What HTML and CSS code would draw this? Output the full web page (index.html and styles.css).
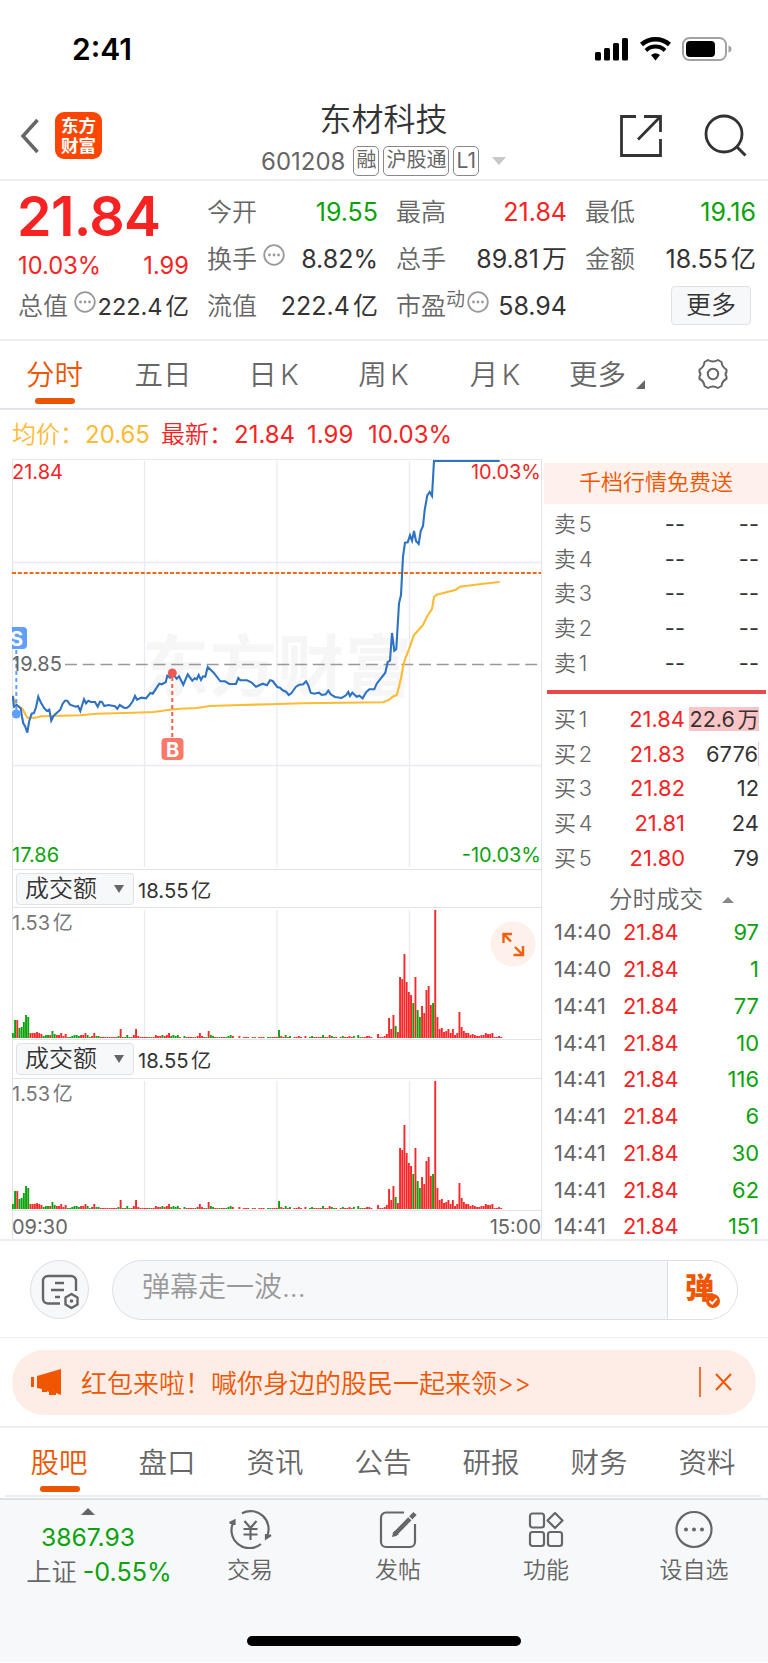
FILE: index.html
```html
<!DOCTYPE html>
<html lang="zh-CN">
<head>
    <meta charset="UTF-8">
    <meta name="viewport" content="width=device-width, initial-scale=1.0">
    <title>东材科技 601208</title>
    <link rel="stylesheet" href="styles.css">
</head>
<body>
    <!-- Status bar -->
    <div class="status-bar">
        <span class="status-time">2:41</span>
        <svg class="status-icons" width="138" height="26" viewBox="0 0 138 26">
            <rect x="1" y="16" width="6" height="8.500" rx="1.500"/>
            <rect x="10" y="12" width="6" height="12.500" rx="1.500"/>
            <rect x="19" y="7" width="6" height="17.500" rx="1.500"/>
            <rect x="28" y="2" width="6" height="22.500" rx="1.500"/>
            <path d="M47.500 8.500a21 21 0 0 1 28 0" fill="none" stroke="#000" stroke-width="4.500"/>
            <path d="M52 14.500a13.500 13.500 0 0 1 19 0" fill="none" stroke="#000" stroke-width="4"/>
            <path d="M57 19a7.500 7.500 0 0 1 9 0L61.500 24.500z"/>
            <rect x="89" y="2" width="43" height="22" rx="6.500" fill="none" stroke="#a2a2a2" stroke-width="2"/>
            <rect x="92" y="5" width="29" height="16" rx="4"/>
            <path d="M134.500 9.500q3 1 3 3.500t-3 3.500z" fill="#a2a2a2"/>
        </svg>
    </div>

    <!-- Header -->
    <header class="header">
        <svg class="back" width="20" height="36" viewBox="0 0 20 36"><path d="M17.500 2L3 18l14.500 16" fill="none" stroke="#666" stroke-width="3.500"/></svg>
        <div class="logo">东方<br>财富</div>
        <div class="title">
            <h1>东材科技</h1>
            <div class="code">
                <span>601208</span>
                <em>融</em><em>沪股通</em><em>L1</em>
                <svg width="14" height="8" viewBox="0 0 14 8"><path d="M0 0h14L7 8z" fill="#c8c8c8"/></svg>
            </div>
        </div>
        <svg class="share" width="44" height="44" viewBox="0 0 44 44"><path d="M17 2.500H2.500v39h39V25M25 2.500h16.500V18M41 3L19 25.500" fill="none" stroke="#333" stroke-width="2.800"/></svg>
        <svg class="search" width="44" height="44" viewBox="0 0 44 44"><circle cx="20" cy="20" r="18" fill="none" stroke="#333" stroke-width="2.800"/><path d="M33 33l8.500 8.500" stroke="#333" stroke-width="3"/></svg>
    </header>

    <!-- Quote -->
    <section class="quote">
        <div class="quote-col first">
            <div class="price">21.84</div>
            <div class="row change red"><span>10.03%</span><span>1.99</span></div>
            <div class="row"><label>总值</label><svg class="tip" viewBox="0 0 22 22"><use href="#tip"/></svg><b class="small">222.4亿</b></div>
        </div>
        <div class="quote-col">
            <div class="row"><label>今开</label><b class="green">19.55</b></div>
            <div class="row"><label>换手</label><svg class="tip" viewBox="0 0 22 22"><use href="#tip"/></svg><b>8.82%</b></div>
            <div class="row"><label>流值</label><b>222.4亿</b></div>
        </div>
        <div class="quote-col">
            <div class="row"><label>最高</label><b class="red">21.84</b></div>
            <div class="row"><label>总手</label><b>89.81万</b></div>
            <div class="row"><label>市盈<sup>动</sup></label><svg class="tip pe" viewBox="0 0 22 22"><use href="#tip"/></svg><b>58.94</b></div>
        </div>
        <div class="quote-col">
            <div class="row"><label>最低</label><b class="green">19.16</b></div>
            <div class="row"><label>金额</label><b>18.55亿</b></div>
            <div class="row"><button class="more-btn">更多</button></div>
        </div>
    </section>

    <!-- Period tabs -->
    <nav class="periods">
        <a class="active">分时</a>
        <a>五日</a>
        <a>日K</a>
        <a>周K</a>
        <a>月K</a>
        <a class="more">更多<svg width="9" height="9" viewBox="0 0 9 9"><path d="M9 0v9H0z" fill="#666"/></svg></a>
        <svg class="gear" width="32" height="32" viewBox="0 0 32 32" fill="none" stroke="#666" stroke-width="2">
            <circle cx="16" cy="16" r="5.200"/>
            <path d="M11 2Q16 5 21 2L24.500 4Q25 9 29.500 11.500V14Q27.500 16 29.500 18.500V21Q25 23 24.500 28L21 30Q16 27 11 30L7.500 28Q7 23 2.500 21V18.500Q4.500 16 2.500 14V11.500Q7 9 7.500 4Z" stroke-linejoin="round"/>
        </svg>
    </nav>

    <div class="legend">
        <span class="avg">均价：</span><span class="avg v1">20.65</span>
        <span class="red v2">最新：</span><span class="red v3">21.84</span><span class="red v4">1.99</span><span class="red v5">10.03%</span>
    </div>

    <!-- Chart and order book -->
    <main class="market">
        <div class="charts">
            <svg class="chart" width="530" height="410" viewBox="0 0 530 410">
                <text class="watermark" x="130" y="232" textLength="270">东方财富</text>
                <path class="grid" d="M132.500 2v406M265 2v406M397.500 2v406M0 103.500h529M0 306.500h529"/>
                <path d="M0 114h529" stroke="#f26a1b" stroke-width="2" stroke-dasharray="4 1.850"/>
                <path d="M53 205.500h475" stroke="#999" stroke-width="1.500" stroke-dasharray="12 5.700"/>
                <polyline class="avg-line" points="0.7,237 4.7,246 10.7,250.3 15.3,258.7 23,258.7 29.7,257.3 68,256.3 84.7,254.7 121.3,253.7 141.3,253 158,250.7 168,249.7 184.7,249 198,247 228,246 258,245.3 291.3,244.3 371.3,243.3 377.3,240.7 380.7,237.7 384.7,236 387,227.7 389.3,217.7 391,207.7 393,200.3 397.3,189.3 402,176 406.3,171.3 411,166 415.3,157 420,150 422,138 424.7,135.7 444,130.7 448,127.7 471.3,124.7 487.7,123"/>
                <polyline class="price-line" points="0.7,237 2,247.7 4.7,246 8.7,249.3 10,257.7 11.3,264.3 13.3,267.7 15.3,273.7 17.3,261.7 19.7,254.7 22,254 24,248.3 26.3,237.7 28.7,243.3 32.3,249.3 35,252 37.3,250.7 39.3,261.7 41.7,256.7 48.3,250.7 50.7,244.7 53,241.7 55.3,241.7 58,245.7 63.7,247.7 66,247 68.3,252 72,240.3 74,244.3 76.3,241.7 78.7,243 83,243 85.7,247.7 88,242.7 90,243 92.3,247 96.3,246 103,247.3 105.3,249.7 107.7,246 112,248.7 114.7,249 117.3,247 120.7,242.3 123,237 125,240.7 129.3,238.7 134,239.3 138.3,234 140.7,234.7 147.3,224.7 149.7,225.3 153.7,223.3 155.3,216.7 158,218.7 160.3,214.3 164.7,219.7 167,217.3 171.3,225.7 175.7,215.3 180.3,221.7 182.7,219.3 184.7,220.3 186.7,216 189,221 191,217.3 193.3,217.7 195.7,208 201.7,213.7 208.3,222.3 213,222.3 217.3,225 224,225 226.3,219 228.3,221.3 235,221.3 239.3,223.3 244,227.7 250.7,224.7 255,226.3 258,221.3 260.7,222 265.3,228 268,228.7 270.7,231.3 274,232.7 276.7,236 279.3,234.3 284,227.7 287.3,225.7 291.3,225.3 294,222.3 296.3,226.3 298.7,233.7 302,234.7 307,233.7 309.7,236 313.7,235.3 316.3,231.7 318.7,235.3 323,238 329.7,239 334,236.3 336.3,233 338,237 340.3,233.7 344.7,237.7 347.3,236.7 350.7,239.3 354,233.3 357.3,230.3 362.3,230.3 364.7,224.7 373.3,213.7 375.7,203 378,201.7 380,174 382.3,191.7 384.3,190 387,144.3 389,136 391,97.7 393,83.7 395.7,83.3 398,76.3 400,81.7 402,72 404,82 406.7,85 408.7,72 411,67 412.7,51 415.3,36.3 417.7,33 420,37 422,2 487.7,2"/>
                <path d="M4.300 191v60" stroke="#609ffb" stroke-width="2" stroke-dasharray="4 3"/>
                <circle cx="4.300" cy="255" r="4.500" fill="#609ffb"/>
                <rect x="-7" y="168" width="22" height="22" rx="4" fill="#609ffb"/>
                <text class="mark" x="4.500" y="186.500">S</text>
                <path d="M160.300 218v61" stroke="#f0604f" stroke-width="2" stroke-dasharray="4 3"/>
                <circle cx="160.300" cy="214" r="4.500" fill="#ec5a55"/>
                <rect x="149.500" y="279" width="22" height="22" rx="4" fill="#fb7969"/>
                <text class="mark" x="160.500" y="297.500">B</text>
                <text class="tick red" x="0" y="19.500">21.84</text>
                <text class="tick red end" x="529" y="19.500">10.03%</text>
                <text class="tick" x="0" y="212">19.85</text>
                <text class="tick green" x="0" y="403">17.86</text>
                <text class="tick green end" x="529" y="403">-10.03%</text>
            </svg>
            <div class="indicator"><button>成交额<i></i></button><span>18.55亿</span></div>
            <div class="volume">
                <span class="peak">1.53亿</span>
                <svg class="bars" width="529" height="131" viewBox="0 0 529 131"></svg>
                <svg class="expand" width="46" height="46" viewBox="0 0 46 46"><circle cx="23" cy="23" r="22.500" fill="#fef0ea"/><path d="M13.500 22v-9H22M13.500 13l7.500 7.500M33 25v9h-9.500M33 34l-8-8" fill="none" stroke="#f0600f" stroke-width="2.400"/></svg>
            </div>
            <div class="indicator second"><button>成交额<i></i></button><span>18.55亿</span></div>
            <div class="volume">
                <span class="peak">1.53亿</span>
                <svg class="bars" width="529" height="131" viewBox="0 0 529 131"></svg>
            </div>
            <div class="axis"><span>09:30</span><span>15:00</span></div>
        </div>

        <aside class="book">
            <div class="promo">千档行情免费送</div>
            <div class="levels">
                <div><span>卖5</span><b>--</b><b>--</b></div>
                <div><span>卖4</span><b>--</b><b>--</b></div>
                <div><span>卖3</span><b>--</b><b>--</b></div>
                <div><span>卖2</span><b>--</b><b>--</b></div>
                <div><span>卖1</span><b>--</b><b>--</b></div>
            </div>
            <div class="split"></div>
            <div class="levels">
                <div><span>买1</span><b class="red">21.84</b><b class="full">22.6万</b></div>
                <div><span>买2</span><b class="red">21.83</b><b class="thin">6776</b></div>
                <div><span>买3</span><b class="red">21.82</b><b>12</b></div>
                <div><span>买4</span><b class="red">21.81</b><b>24</b></div>
                <div><span>买5</span><b class="red">21.80</b><b>79</b></div>
            </div>
            <div class="ticks-title">分时成交<i></i></div>
            <div class="ticks">
                <div><span>14:40</span><b>21.84</b><em>97</em></div>
                <div><span>14:40</span><b>21.84</b><em>1</em></div>
                <div><span>14:41</span><b>21.84</b><em>77</em></div>
                <div><span>14:41</span><b>21.84</b><em>10</em></div>
                <div><span>14:41</span><b>21.84</b><em>116</em></div>
                <div><span>14:41</span><b>21.84</b><em>6</em></div>
                <div><span>14:41</span><b>21.84</b><em>30</em></div>
                <div><span>14:41</span><b>21.84</b><em>62</em></div>
                <div><span>14:41</span><b>21.84</b><em>151</em></div>
            </div>
        </aside>
    </main>

    <!-- Danmu input -->
    <section class="danmu">
        <div class="round">
            <svg width="40" height="40" viewBox="0 0 40 40" fill="none" stroke="#666" stroke-width="2.400">
                <path d="M20 32.500H8a5 5 0 0 1-5-5V10a5 5 0 0 1 5-5h23a5 5 0 0 1 5 5v10"/>
                <path d="M15 12h9M11 19h13M15 26h5" stroke-width="2.600"/>
                <path d="M31.500 23l6 3.500v7l-6 3.500-6-3.500v-7z" stroke-linejoin="round"/>
                <circle cx="31.500" cy="30" r="1.800" fill="#666" stroke="none"/>
            </svg>
        </div>
        <div class="field">
            <span>弹幕走一波...</span>
            <div class="send">弹<svg width="14" height="14" viewBox="0 0 14 14"><circle cx="7" cy="7" r="7" fill="#f05500"/><path d="M3.500 7l2.700 2.700 4.500-5" fill="none" stroke="#fff" stroke-width="1.800"/></svg></div>
        </div>
    </section>

    <section class="notice-wrap">
        <div class="notice">
            <svg width="32" height="28" viewBox="0 0 32 28" fill="#f05500"><path d="M0 9h3v10H0zM6 8L30 1v26l-5-2v2h-7v-3l-2-1v1h-5v-3l-5-1z"/></svg>
            <span>红包来啦！喊你身边的股民一起来领&gt;&gt;</span>
            <svg class="close" width="34" height="30" viewBox="0 0 34 30" fill="none" stroke="#f05500"><path d="M1 0v30" stroke-width="1.600"/><path d="M17 7l15 16M32 7L17 23" stroke-width="2"/></svg>
        </div>
    </section>

    <!-- Content tabs -->
    <nav class="tabs">
        <a class="active">股吧</a>
        <a>盘口</a>
        <a>资讯</a>
        <a>公告</a>
        <a>研报</a>
        <a>财务</a>
        <a>资料</a>
    </nav>

    <!-- Bottom bar -->
    <footer class="bottom">
        <div class="index">
            <i></i>
            <div class="green">3867.93</div>
            <div class="sh">上证<span class="green">-0.55%</span></div>
        </div>
        <div class="item">
            <svg width="44" height="40" viewBox="0 0 44 40" fill="none" stroke="#666" stroke-width="2.200">
                <path d="M14 4.300A18 18 0 0 1 39 27.500M33 35A18 18 0 0 1 6 12M1.500 14l5-2.500V16M43 26l-5 3.500V25"/>
                <path d="M16.500 12l6 7 6-7M22.500 19v12M15.500 20h14M15.500 25.500h14"/>
            </svg>
            <span>交易</span>
        </div>
        <div class="item">
            <svg width="40" height="40" viewBox="0 0 40 40" fill="none" stroke="#666" stroke-width="2.200">
                <path d="M26 3.500H8a5 5 0 0 0-5 5V33a5 5 0 0 0 5 5h24a5 5 0 0 0 5-5V15"/>
                <path d="M37 4.500L16 26" stroke-width="4.500"/><path d="M16.500 22l-2 5.500 5.500-2z" fill="#666" stroke-width="1"/><path d="M30 7l4 4" stroke="#f7f8fa" stroke-width="1.500"/>
            </svg>
            <span>发帖</span>
        </div>
        <div class="item">
            <svg width="40" height="40" viewBox="0 0 40 40" fill="none" stroke="#666" stroke-width="2.200">
                <rect x="4" y="4.500" width="14" height="14" rx="2.500"/><rect x="4" y="23" width="14" height="14" rx="2.500"/><rect x="22" y="23" width="14" height="14" rx="2.500"/>
                <path d="M29 4l7.500 7.500L29 19l-7.500-7.500z" stroke-linejoin="round"/>
            </svg>
            <span>功能</span>
        </div>
        <div class="item">
            <svg width="40" height="40" viewBox="0 0 40 40"><circle cx="20" cy="20.500" r="17.500" fill="none" stroke="#666" stroke-width="2.200"/><g fill="#666"><circle cx="12" cy="20.500" r="2"/><circle cx="20" cy="20.500" r="2"/><circle cx="28" cy="20.500" r="2"/></g></svg>
            <span>设自选</span>
        </div>
        <div class="home-bar"></div>
    </footer>

    <svg width="0" height="0" class="defs">
        <g id="tip"><circle cx="11" cy="11" r="9.800" fill="none" stroke="#999" stroke-width="1.800"/><g fill="#999"><circle cx="6.500" cy="11" r="1.400"/><circle cx="11" cy="11" r="1.400"/><circle cx="15.500" cy="11" r="1.400"/></g></g>
    </svg>

    <script>
        // One value per minute, negative = falling minute
        const volumes = [
            -5,-18,18,-10,-11,-16,-23,-21,5,5,5,6,5,4,-2,-3,-3,3,-7,-4,3,3,5,2,4,-1,-1,-2,-3,-3,
            -2,3,3,5,-3,-1,2,5,-2,-2,1,1,1,1,1,1,1,1,-2,9,-1,1,-3,-1,1,3,9,2,1,1,
            1,1,-1,1,1,3,2,2,-3,2,3,5,-2,-3,-2,-3,1,0,-2,1,1,1,1,-1,2,5,2,1,-1,7,
            -3,-2,1,1,-1,1,1,-1,-2,-3,2,0,0,2,0,1,1,1,0,-1,1,0,1,1,1,0,-1,-1,1,1,
            1,-8,2,1,-3,1,-2,0,1,1,2,1,0,2,0,-1,-2,1,1,1,1,-3,1,1,3,-2,-1,1,0,1,
            -2,1,1,2,1,-2,0,-3,1,-1,1,2,2,1,0,0,4,1,1,2,4,20,9,23,-12,6,61,59,84,56,
            46,43,-35,61,-28,-21,32,25,48,52,33,-35,128,21,9,10,6,7,9,5,9,3,5,26,11,7,5,5,3,4,
            3,2,2,3,3,5,4,4,5,1,1,2,1
        ];

        document.querySelectorAll('.bars').forEach(function(svg) {
            let html = '<path class="grid" d="M132.5 2v129M265 2v129M397.5 2v129"/>';
            volumes.forEach(function(v, i) {
                const h = Math.abs(v);
                const color = v < 0 ? '#0ba30b' : '#f72828';
                html += '<rect x="' + (i * 2.2 - 0.1).toFixed(1) + '" y="' + (130 - h) + '" width="1.9" height="' + h + '" fill="' + color + '"/>';
            });
            svg.innerHTML = html;
        });
    </script>
</body>
</html>
```
FILE: styles.css
```css
* {
    margin: 0;
    padding: 0;
    box-sizing: border-box;
}
body {
    width: 768px;
    height: 1663px;
    overflow: hidden;
    background: #fff;
    font-family: Inter, "Noto Sans CJK SC", sans-serif;
    font-size: 25px;
    color: #333;
    text-autospace: normal;
}
svg {
    display: block;
    flex: none;
}
b, i, em {
    font-weight: 400;
    font-style: normal;
}
button {
    font-family: inherit;
    color: #333;
    background: #f7f8fa;
    border: 1px solid #dfe1e6;
    border-radius: 4px;
}
.defs {
    position: absolute;
}
.red {
    color: #f72323;
    fill: #f72323;
}
.green {
    color: #0ba30b;
    fill: #0ba30b;
}

/* status bar */
.status-bar {
    height: 100px;
    padding: 36px 36px 0 72px;
    display: flex;
    justify-content: space-between;
}
.status-time {
    font-size: 30px;
    font-weight: 600;
    line-height: 27px;
    color: #000;
}

/* header */
.header {
    height: 81px;
    border-bottom: 2px solid #eee;
    display: flex;
    padding: 0 20px;
}
.back {
    margin-top: 18px;
}
.logo {
    width: 47px;
    height: 47px;
    margin: 12px 0 0 15px;
    padding-top: 4px;
    border-radius: 9px;
    background: #ff4502;
    color: #fff;
    font-size: 17.5px;
    font-weight: 700;
    line-height: 19.5px;
    text-align: center;
}
.title {
    width: 517px;
    padding-left: 46px;
    text-align: center;
}
.title h1 {
    font-size: 32px;
    font-weight: 350;
    line-height: 40px;
}
.code {
    display: flex;
    align-items: center;
    justify-content: center;
    height: 30px;
    margin-top: 6px;
    gap: 4px;
    color: #666;
    font-size: 24px;
}
.code span {
    margin-right: 4px;
}
.code em {
    height: 30px;
    padding: 0 2px;
    border: 1.5px solid #888;
    border-radius: 5px;
    font-size: 20px;
    line-height: 27px;
}
.code em:nth-of-type(3) {
    padding: 0 2px;
    font-size: 21px;
}
.code svg {
    margin-left: 9px;
}
.share {
    margin-top: 14px;
}
.search {
    margin: 14px 0 0 41px;
}

/* quote */
.quote {
    height: 160px;
    border-bottom: 2px solid #eee;
    display: flex;
    gap: 18px;
    padding: 7px 12px 0 18px;
}
.quote-col {
    width: 171px;
    padding-top: 1px;
    white-space: nowrap;
}
.price {
    height: 54px;
    margin-left: -1px;
    font-size: 55.5px;
    font-weight: 600;
    line-height: 53px;
    letter-spacing: -0.7px;
    color: #f72323;
}
.row {
    display: flex;
    height: 47px;
    align-items: center;
    line-height: 47px;
}
.row label {
    color: #666;
    font-weight: 350;
}
.row b {
    margin-left: auto;
}
.row .small {
    font-size: 23.5px;
}
.first .change {
    height: 40px;
    justify-content: space-between;
    padding-top: 6px;
    font-size: 23.7px;
    line-height: 40px;
}
.row .tip {
    width: 22px;
    height: 22px;
    margin: -10px 0 0 6px;
}
.row .pe {
    margin-left: 2px;
}
.row sup {
    font-size: 19px;
    line-height: 0;
    vertical-align: 9px;
}
.more-btn {
    width: 80px;
    height: 39px;
    margin-left: auto;
    margin-right: 5px;
    margin-top: -3px;
    font-size: 25px;
    font-weight: 350;
    line-height: 35px;
}

/* period tabs */
.periods {
    height: 69px;
    border-bottom: 2px solid #e2e3ea;
    display: grid;
    grid-template-columns: 109px 108px 113px 107px 116px 109px 106px;
    text-align: center;
    font-size: 28.5px;
    font-weight: 350;
    line-height: 68px;
    color: #666;
}
.periods .active, .tabs .active {
    position: relative;
    color: #f05500;
}
.periods .active::after, .tabs .active::after {
    content: "";
    position: absolute;
    left: 35px;
    bottom: 5px;
    width: 40px;
    height: 6px;
    border-radius: 3px;
    background: #ec5500;
}
.periods .more {
    display: flex;
    align-items: flex-end;
    padding-left: 16px;
}
.periods .more svg {
    margin: 0 0 20px 10px;
}
.gear {
    margin: 17px 0 0 35px;
}

/* legend */
.legend {
    display: flex;
    height: 49px;
    padding-left: 12px;
    font-size: 24px;
    line-height: 49px;
}
.legend span {
    white-space: nowrap;
}
.avg {
    color: #ffba33;
}
.legend span:nth-child(1), .legend .v2 {
    width: 73px;
    font-weight: 350;
}
.legend .v1 {
    width: 76px;
}
.legend .v3 {
    width: 73px;
}
.legend .v4 {
    width: 61px;
}

/* charts */
.market {
    height: 782px;
    display: flex;
    padding-left: 12px;
    border-bottom: 2px solid #eee;
    overflow: hidden;
}
.charts {
    width: 530px;
    border-left: 1px solid #e0e3ea;
    border-right: 1px solid #e0e3ea;
    border-top: 1px solid #e5e8ee;
}
.chart {
    height: 411px;
    margin: -1px 0 0 -1px;
    border-bottom: 1px solid #e0e3ea;
}
.grid {
    fill: none;
    stroke: #e9ebf3;
    stroke-width: 1.3;
}
.watermark {
    font-size: 67px;
    font-weight: 700;
    fill: #f6f6f6;
}
.avg-line, .price-line {
    fill: none;
    stroke: #ffba33;
    stroke-width: 2.1;
}
.price-line {
    stroke: #2e72c4;
}
.mark {
    font-size: 20px;
    font-weight: 700;
    text-anchor: middle;
    fill: #fff;
}
.tick {
    font-size: 20px;
}
.tick:not(.red):not(.green) {
    fill: #666;
}
.end {
    text-anchor: end;
}
.indicator {
    display: flex;
    align-items: center;
    height: 37px;
    padding-left: 3px;
    font-size: 20.3px;
}
.indicator button {
    display: flex;
    align-items: center;
    width: 118px;
    height: 32px;
    padding-left: 8px;
    font-size: 24px;
    font-weight: 350;
    line-height: 28px;
}
.indicator.second {
    height: 38px;
}
.indicator i, .ticks-title i {
    border: 5px solid transparent;
    border-top: 8px solid #666;
    border-bottom: 0;
    margin-left: 17px;
}
.indicator span {
    margin-left: 4px;
}
.volume {
    position: relative;
    height: 133px;
    border-top: 1px solid #e0e3ea;
    border-bottom: 1px solid #e0e3ea;
}
.bars {
    margin-left: -1px;
}
.peak {
    position: absolute;
    top: 2px;
    left: -1px;
    font-size: 20px;
    line-height: 26px;
    color: #777;
}
.expand {
    position: absolute;
    top: 13px;
    right: 5px;
}
.axis {
    display: flex;
    justify-content: space-between;
    margin-left: -1px;
    font-size: 20px;
    line-height: 32px;
    color: #666;
}

/* order book */
.book {
    width: 226px;
}
.promo {
    height: 41px;
    margin: 4px 0 3px 2px;
    background: #fef0ea;
    color: #f05500;
    font-size: 22px;
    font-weight: 350;
    line-height: 38px;
    text-align: center;
}
.levels div {
    display: grid;
    grid-template-columns: 50px 81px 74px;
    height: 34.600px;
    margin-left: 12px;
    align-items: center;
    font-size: 21.9px;
    line-height: 24px;
    text-align: right;
}
.levels span {
    text-align: left;
    color: #666;
    font-weight: 350;
}
.levels .full {
    margin-left: 4px;
    background: #fbc5c7;
    white-space: nowrap;
    font-size: 21.5px;
}
.levels .thin {
    border-right: 1px solid #fbc5c7;
}
.split {
    height: 4px;
    margin: 10px 2px 8px 5px;
    background: #e9484b;
}
.ticks-title {
    display: flex;
    align-items: center;
    height: 39.5px;
    padding: 10px 0 0 67px;
    font-size: 23.5px;
    font-weight: 350;
    line-height: 27px;
    color: #666;
}
.ticks-title i {
    border-width: 0 6px 6px;
    border-bottom: 6px solid #888;
    margin-left: 19px;
}
.ticks div {
    display: grid;
    grid-template-columns: 69px 80px 55px;
    height: 36.750px;
    margin-left: 12px;
    font-size: 21.900px;
    line-height: 36.750px;
}
.ticks span {
    color: #666;
}
.ticks b {
    color: #f72323;
}
.ticks em {
    color: #0ba30b;
    margin-right: -1px;
    text-align: right;
}

/* danmu */
.danmu {
    display: flex;
    height: 97px;
    padding: 19px 30px 0 30px;
    border-bottom: 1px solid #eee;
}
.round {
    width: 59px;
    height: 59px;
    padding: 10px 0 0 9px;
    border: 1px solid #dcdfe5;
    border-radius: 50%;
    background: #f7f8fa;
}
.field {
    display: flex;
    justify-content: space-between;
    width: 627px;
    height: 60px;
    margin-left: 23px;
    padding-left: 29px;
    border: 1px solid #dcdfe5;
    border-radius: 30px;
    background: #f7f8fa;
    color: #999;
    font-size: 28px;
    font-weight: 350;
    line-height: 53px;
    text-autospace: no-autospace;
    overflow: hidden;
}
.send {
    position: relative;
    width: 70px;
    padding-left: 17px;
    border-left: 1px solid #dcdfe5;
    background: #fff;
    color: #f05500;
    font-size: 29px;
    font-weight: 900;
    line-height: 56px;
}
.send svg {
    position: absolute;
    left: 38px;
    top: 33px;
}

/* notice */
.notice-wrap {
    height: 90px;
    padding: 12px;
    border-bottom: 2px solid #eee;
}
.notice {
    display: flex;
    align-items: center;
    height: 65px;
    padding: 0 23px 2px 19px;
    border-radius: 32px;
    background: #fdede6;
    color: #f05500;
    font-size: 26px;
    font-weight: 350;
}
.notice span {
    margin-left: 18px;
    margin-top: -1px;
}
.notice .close {
    margin-left: auto;
}

/* content tabs */
.tabs {
    display: grid;
    grid-template-columns: repeat(7, 108px);
    height: 69px;
    margin: 0 7px 0 5px;
    border-bottom: 2px solid #eee;
    font-size: 28.5px;
    font-weight: 350;
    line-height: 69px;
    text-align: center;
    color: #666;
}
.tabs .active::after {
    left: 35px;
}

/* bottom bar */
.bottom {
    display: flex;
    flex-wrap: wrap;
    align-content: flex-start;
    height: 164px;
    margin-top: 1px;
    border-top: 2px solid #dfe1e6;
    background: #f7f8fa;
    color: #666;
    font-size: 23px;
    font-weight: 350;
}
.index {
    width: 176px;
    height: 119px;
    padding-top: 8px;
    text-align: center;
    font-size: 24.700px;
    line-height: 35px;
}
.index i {
    display: block;
    width: 14px;
    margin: 0 auto 5px;
    border: 7px solid transparent;
    border-top: 0;
    border-bottom-color: #666;
}
.index .green {
    font-weight: 400;
}
.index .sh {
    padding-left: 22px;
    font-size: 25.2px;
    white-space: nowrap;
}
.index span {
    margin-left: 6px;
}
.item {
    width: 148px;
    padding-top: 9px;
    text-align: center;
}
.item svg {
    margin: 0 auto;
}
.item span {
    display: block;
    line-height: 42px;
}
.home-bar {
    width: 274px;
    height: 10px;
    margin: 17px auto 0;
    border-radius: 5px;
    background: #000;
}
```
